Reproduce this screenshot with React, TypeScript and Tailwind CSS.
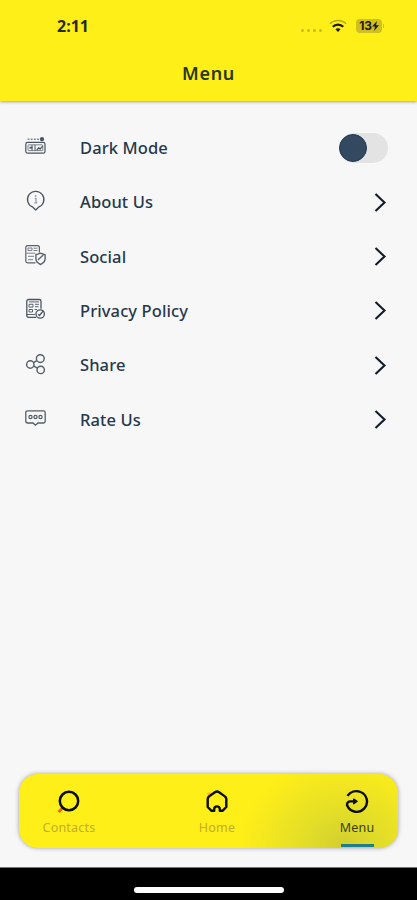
import type { ReactNode } from 'react'

function DarkModeIcon() {
  return (
    <svg width="22" height="22" viewBox="0 0 22 22" fill="none" stroke="#4b5560" strokeWidth="1.2">
      <path d="M2.5 4.2h13" strokeDasharray="2 1.2" strokeWidth="1" />
      <circle cx="17" cy="4.2" r="1.5" fill="#4b5560" />
      <rect x="0.8" y="7.4" width="19.2" height="10.8" rx="1.8" />
      <rect x="3" y="9.8" width="14.8" height="5.8" rx="0.8" strokeWidth="0.7" />
      <path d="M7 10v5.4M10 10v5.4" strokeWidth="1" />
      <path d="M4.5 12.7h3" strokeWidth="1.8" />
      <path d="m11.800 15 2-2.200 1.300 1.300 2.500-3" strokeWidth="1.3" />
    </svg>
  )
}

function AboutIcon() {
  return (
    <svg width="22" height="22" viewBox="0 0 22 22" fill="none" stroke="#4b5560" strokeWidth="1.3">
      <path d="M10.7 20 7.9 17.2A8.2 8.2 0 1 1 13.5 17.2Z" strokeLinejoin="round" />
      <path d="M9.7 8.4H11v4.2M9.3 12.8h3" stroke="#979fa5" />
      <circle cx="10.7" cy="5.9" r="0.9" fill="#979fa5" stroke="none" />
    </svg>
  )
}

function SocialIcon() {
  return (
    <svg width="22" height="22" viewBox="0 0 22 22" fill="none" stroke="#59636c" strokeWidth="1.2">
      <path d="M10.5 18.8H2.6a1.8 1.8 0 0 1-1.8-1.8V3.5a1.8 1.8 0 0 1 1.8-1.8h10a1.8 1.8 0 0 1 1.8 1.8v5" />
      <path d="M3 4h4v2.5H3zM8.5 4.2h4M8.5 6.5h4M1.3 9.2h9M3 12.3h6M3 15.7h5" strokeWidth="0.8" />
      <path d="m15.5 9.2 4.6 1.6v4c0 2.6-2.1 4.6-4.6 5.7-2.5-1.1-4.6-3.1-4.6-5.7v-4Z" strokeWidth="1.4" />
      <path d="m12.9 15.9 5.3-4.8" strokeWidth="1.4" />
    </svg>
  )
}

function PrivacyIcon() {
  return (
    <svg width="22" height="22" viewBox="0 0 22 22" fill="none" stroke="#4b5560" strokeWidth="1.3">
      <path d="M11 19.3H3.6a1.8 1.8 0 0 1-1.8-1.8V3.3a1.8 1.8 0 0 1 1.8-1.8h10.6A1.8 1.8 0 0 1 16 3.3v7.5" />
      <path d="M4 3.9h10M4 6.3h4v2.8H4zM10 6.3h4M10 8.7h3.5M4 11.5h3.5V14H4zM9.5 11.5h2.5M2 16.5h8" strokeWidth="0.9" />
      <circle cx="15.2" cy="16" r="4.2" />
      <path d="m13.2 16.2 1.3 1.2 3.8-4.5" strokeWidth="1.4" />
    </svg>
  )
}

function ShareIcon() {
  return (
    <svg width="22" height="22" viewBox="0 0 22 22" fill="none" stroke="#535d67" strokeWidth="1.4">
      <circle cx="5.3" cy="11.5" r="3.7" />
      <circle cx="15.3" cy="5.6" r="3.9" />
      <circle cx="15.7" cy="16.9" r="3.7" />
      <path d="m8.5 9.6 3.3-2M8.6 13l3.7 2.2" />
    </svg>
  )
}

function RateIcon() {
  return (
    <svg width="22" height="22" viewBox="0 0 22 22" fill="none" stroke="#535d67" strokeWidth="1.3">
      <path d="M2.6 3.8h15.8a1.8 1.8 0 0 1 1.8 1.8v8.6a1.8 1.8 0 0 1-1.8 1.8h-5.4l-2.5 2.2L8 16H2.6a1.8 1.8 0 0 1-1.8-1.8V5.6a1.8 1.8 0 0 1 1.8-1.8Z" />
      <g strokeWidth="1.2">
        <circle cx="5.5" cy="10" r="1.6" />
        <circle cx="10.5" cy="10" r="1.6" />
        <circle cx="15.5" cy="10" r="1.6" />
      </g>
    </svg>
  )
}

function ContactsIcon() {
  return (
    <svg width="24" height="24" viewBox="0 0 24 24" fill="none">
      <path d="m5.5 18-4 4" stroke="#f2622e" strokeWidth="2.8" />
      <circle cx="12" cy="11" r="9.2" stroke="#0b0d05" strokeWidth="2.5" />
    </svg>
  )
}

function HomeIcon() {
  return (
    <svg width="24" height="24" viewBox="0 0 24 24" fill="none">
      <path d="M2.5 2.5h4v4h-4z" fill="#fcb51c" />
      <path
        d="M9.2 20.700H6.300L2.700 17V9c0-1.100.5-2 1.400-2.600l5.800-4.200c1.300-.9 2.900-.9 4.200 0l5.800 4.200c.9.600 1.400 1.500 1.400 2.600v8l-3.600 3.700h-2.900v-1.500a2.800 2.800 0 0 0-5.600 0Z"
        stroke="#0b0d05"
        strokeWidth="2.400"
        strokeLinejoin="round"
      />
    </svg>
  )
}

function MenuIcon() {
  return (
    <svg width="24" height="24" viewBox="0 0 24 24" fill="none" stroke="#0b0d05" strokeWidth="2.4">
      <path d="M2.400 5.900C5.500 1.800 10.700.2 15.500 2A10.300 10.300 0 1 1 2.300 15.800C1.400 12.700 3.300 11.400 5.500 11.400h4" />
      <path d="M8.700 9.200 12 11.400 8.700 13.700Z" fill="#0b0d05" strokeWidth="1.400" strokeLinejoin="round" />
    </svg>
  )
}

function ChevronIcon() {
  return (
    <svg width="14" height="20" viewBox="0 0 14 20" fill="none" stroke="#111c2b" strokeWidth="2.1">
      <path d="m1.500 1 9 8.500-9 8.500" />
    </svg>
  )
}

function StatusBar() {
  return (
    <div className="flex h-[51px] items-center justify-between pl-[57px] pr-[33px]">
      <span className="font-['Open_Sans',sans-serif] text-[16px] font-bold text-[#29290f]">2:11</span>
      <div className="flex items-center">
        <div className="mr-[7px] mt-[9px] flex gap-[3px]">
          {[0, 1, 2, 3].map((dot) => (
            <span key={dot} className="size-[3px] rounded-full bg-[#c9bb27]" />
          ))}
        </div>
        <svg width="18" height="14" viewBox="0 0 18 14" fill="none">
          <path d="M1 4.700C5.300.3 12.700.3 17 4.700" stroke="#b5a91e" strokeWidth="1.5" />
          <path d="M3.800 7.800c2.900-3 7.500-3 10.400 0" stroke="#161905" strokeWidth="2.2" />
          <path d="M6.500 10.200c1.400-1.300 3.600-1.300 5 0L9 13Z" fill="#161905" />
        </svg>
        <div className="ml-[9px] flex h-[14px] w-[26px] items-center justify-center rounded-[4px] bg-[#cfbf20] text-[#1d1d0b]">
          <span className="font-['Inter',sans-serif] text-[12px] font-bold leading-none tracking-[-0.2px]">13</span>
          <svg width="7" height="10" viewBox="0 0 7 10" fill="currentColor">
            <path d="M5 0 0 5.600h3L2 10l5-5.700H4Z" />
          </svg>
        </div>
        <span className="ml-px h-1 w-px bg-[#cfbf20]" />
      </div>
    </div>
  )
}

const ITEMS: { label: string; icon: ReactNode; toggle?: boolean }[] = [
  { label: 'Dark Mode', icon: <DarkModeIcon />, toggle: true },
  { label: 'About Us', icon: <AboutIcon /> },
  { label: 'Social', icon: <SocialIcon /> },
  { label: 'Privacy Policy', icon: <PrivacyIcon /> },
  { label: 'Share', icon: <ShareIcon /> },
  { label: 'Rate Us', icon: <RateIcon /> },
]

const TABS: { label: string; icon: ReactNode; width: string; active?: boolean }[] = [
  { label: 'Contacts', icon: <ContactsIcon />, width: 'w-[60px]' },
  { label: 'Home', icon: <HomeIcon />, width: 'w-[56px] mr-[5px]' },
  { label: 'Menu', icon: <MenuIcon />, width: 'w-[34px]', active: true },
]

export default function App() {
  return (
    <div className="flex h-[900px] w-[417px] flex-col overflow-hidden bg-[#f7f7f8] font-['Noto_Sans','Open_Sans',sans-serif]">
      <header className="h-[101px] shrink-0 bg-[#ffef18] shadow-[0_1px_3px_rgba(70,70,90,0.5)]">
        <StatusBar />
        <h1 className="text-center text-[18px] font-semibold leading-[44px] tracking-[0.7px] text-[#27371f]">Menu</h1>
      </header>

      <main className="flex flex-1 flex-col pt-[20px]">
        {ITEMS.map((item) => (
          <div key={item.label} className="flex h-[54.4px] items-center pl-[25px] pr-[29px]">
            <span className="mb-[4px] w-[55px]">{item.icon}</span>
            <span className="flex-1 text-[16.5px] font-medium tracking-[0.1px] text-[#26384b]">{item.label}</span>
            {item.toggle ? (
              <button type="button" aria-label={item.label} className="mb-px h-[30px] w-[49px] rounded-full bg-[#e3e3e3]">
                <span className="block size-[28px] rounded-full border border-[#24394f] bg-[#33495f]" />
              </button>
            ) : (
              <ChevronIcon />
            )}
          </div>
        ))}
      </main>

      <nav className="mx-[19px] mb-[19px] flex h-[74px] shrink-0 justify-between rounded-[19px] bg-[#ffef18] bg-[radial-gradient(ellipse_105px_88px_at_325px_72px,#d3cf2e_0%,#dfdb2a_30%,transparent_100%)] pl-[20px] pr-[24px] shadow-[0_0_4px_rgba(70,70,90,0.5)]">
        {TABS.map((tab) => (
          <div key={tab.label} className={`flex flex-col items-center pt-[16px] ${tab.width}`}>
            {tab.icon}
            <span
              className={`mt-[5px] text-[12.5px] leading-[18px] tracking-[0.2px] ${
                tab.active ? 'text-[#39400e]' : 'text-[#c2ac2c]'
              }`}
            >
              {tab.label}
            </span>
            {tab.active && <span className="mt-auto mb-px h-[3px] w-[33px] shrink-0 bg-[#1f7d8c]" />}
          </div>
        ))}
      </nav>

      <footer className="flex h-[33px] shrink-0 justify-center border-t border-[#777] bg-black pt-[19px]">
        <span className="h-[6px] w-[150px] rounded-full bg-white" />
      </footer>
    </div>
  )
}
